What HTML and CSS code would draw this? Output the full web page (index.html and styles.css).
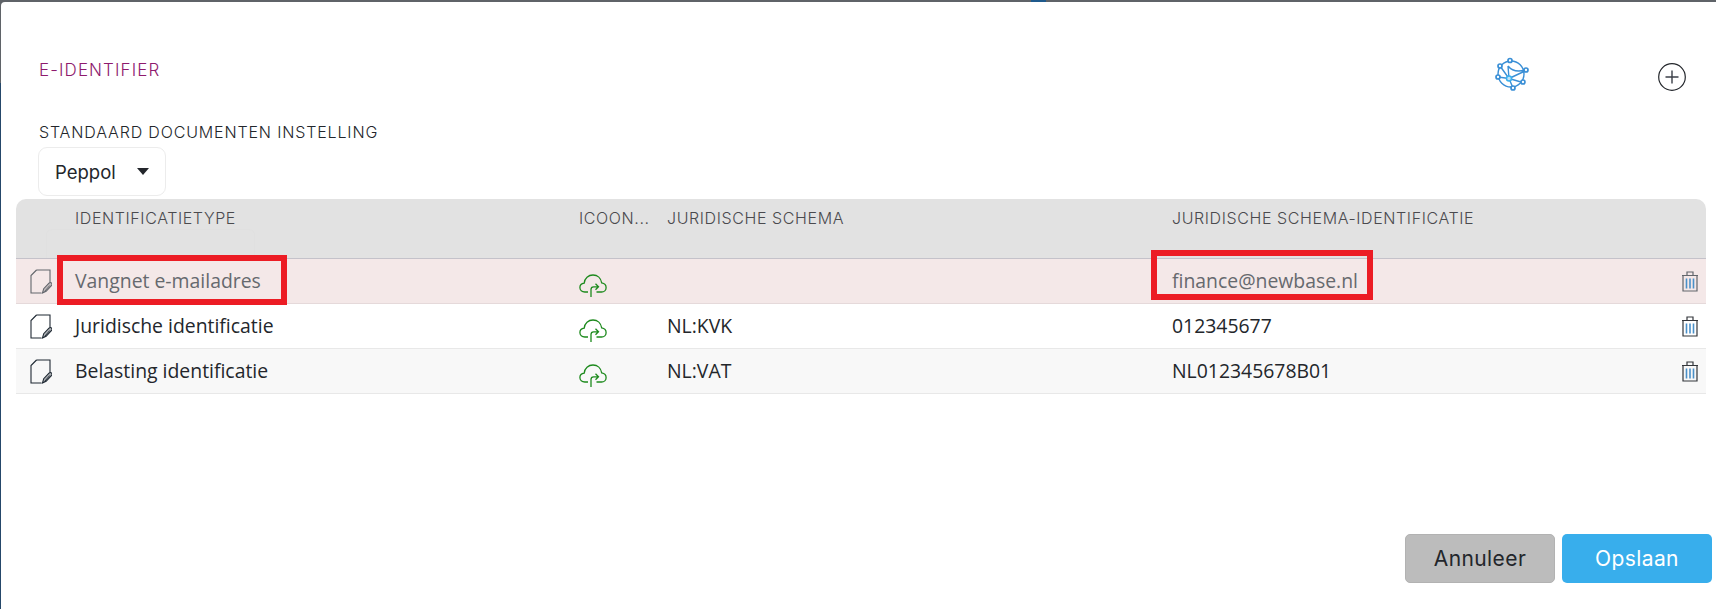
FILE: index.html
```html
<!DOCTYPE html>
<html lang="en">
  <head>
    <meta charset="UTF-8" />
    <title>E-Identifier</title>
    <link rel="stylesheet" href="styles.css">
  </head>
  <body>
    <svg class="icon-defs" width="0" height="0">
      <symbol id="doc" viewBox="0 0 22 25">
        <path d="M6.500 1H20V13.500M11.500 24H1V6.500L6.500 1" fill="none" stroke="currentColor" stroke-width="1.100"/>
        <path d="M12.500 24l1.200-4.300 5.300-5.500c.9-.9 2-.8 2.600-.1s.6 1.800-.2 2.600l-5.300 5.600z" fill="currentColor" fill-opacity="0.35" stroke="currentColor" stroke-width="1.100"/>
        <path d="M14.500 22.500l5.300-6" stroke="currentColor" stroke-width="1"/>
      </symbol>
      <symbol id="cloud" viewBox="0 0 28 23">
        <path d="M9 18H5.800C3 18 .9 16.100 .9 13.600c0-2.400 1.800-4.200 4.300-4.500C5.700 4.400 9.300 1 14 1c4.500 0 8 3.200 8.700 7.900 2.600.4 4.400 2.300 4.400 4.800 0 2.500-2 4.300-4.600 4.300H17.500" fill="none" stroke="#1d8a1d" stroke-width="1.300"/>
        <path d="M12 23V15.500c0-1.600 1-2.700 2.600-2.700H19M16.500 9.800l3 3-3 3" fill="none" stroke="#1d8a1d" stroke-width="1.300"/>
      </symbol>
      <symbol id="trash" viewBox="0 0 18 21">
        <path d="M1 4.500H17M2 4.500V20H16V4.500M6 4.500V1H12V4.500" fill="none" stroke="currentColor" stroke-width="1.200"/>
        <path d="M5.500 7.500V17.500M9 7.500V17.500M12.500 7.500V17.500" stroke="#4a90c8" stroke-width="1.600"/>
      </symbol>
    </svg>

    <div class="top-strip"><span class="top-mark"></span></div>
    <main class="modal">
      <div class="title-row">
        <h1 class="title">E-IDENTIFIER</h1>
        <svg class="network-icon" viewBox="0 0 34 34" width="34" height="34">
          <g fill="none" stroke="#3a8fd6" stroke-width="1.400">
            <circle cx="16" cy="17" r="13"/>
            <path d="M14 21.500L13 9M14 21.500L30 14M14 21.500L26 25M14 21.500L18 31M14 21.500L3 20M5 9L14 21.500M13 9C17 14 23 15 30 13"/>
          </g>
          <g fill="#fff" stroke="#3a8fd6" stroke-width="1.700">
            <circle cx="15" cy="3.500" r="2"/>
            <circle cx="31" cy="13" r="2"/>
            <circle cx="28" cy="25" r="2"/>
            <circle cx="18" cy="31" r="2"/>
            <circle cx="3" cy="20" r="2"/>
            <circle cx="5" cy="9" r="2"/>
          </g>
          <circle cx="14" cy="21.500" r="2.500" fill="#bfe3f8" stroke="#39b0ee" stroke-width="1.500"/>
        </svg>
        <svg class="add-icon" viewBox="0 0 28 28" width="28" height="28">
          <circle cx="14" cy="14" r="13.300" fill="none" stroke="#23262b" stroke-width="1.200"/>
          <path d="M7.500 14H20.500M14 7.500V20.500" stroke="#3b3f48" stroke-width="1.400"/>
        </svg>
      </div>

      <label class="field-label">STANDAARD DOCUMENTEN INSTELLING</label>
      <div class="select-box">
        <span>Peppol</span>
        <span class="caret"></span>
      </div>

      <div class="table-wrap">
        <table class="id-table">
          <colgroup>
            <col class="col-doc"><col class="col-type"><col class="col-icon"><col class="col-schema"><col class="col-id"><col class="col-del">
          </colgroup>
          <thead>
            <tr>
              <th></th>
              <th>IDENTIFICATIETYPE<div class="filter-box"></div></th>
              <th>ICOON...</th>
              <th>JURIDISCHE SCHEMA</th>
              <th>JURIDISCHE SCHEMA-IDENTIFICATIE</th>
              <th></th>
            </tr>
          </thead>
          <tbody>
            <tr class="row-flagged">
              <td><svg class="doc-icon"><use href="#doc"/></svg></td>
              <td>Vangnet e-mailadres</td>
              <td><svg class="cloud-icon"><use href="#cloud"/></svg></td>
              <td></td>
              <td>finance@newbase.nl</td>
              <td><svg class="trash-icon"><use href="#trash"/></svg></td>
            </tr>
            <tr>
              <td><svg class="doc-icon"><use href="#doc"/></svg></td>
              <td>Juridische identificatie</td>
              <td><svg class="cloud-icon"><use href="#cloud"/></svg></td>
              <td>NL:KVK</td>
              <td>012345677</td>
              <td><svg class="trash-icon"><use href="#trash"/></svg></td>
            </tr>
            <tr class="row-alt">
              <td><svg class="doc-icon"><use href="#doc"/></svg></td>
              <td>Belasting identificatie</td>
              <td><svg class="cloud-icon"><use href="#cloud"/></svg></td>
              <td>NL:VAT</td>
              <td>NL012345678B01</td>
              <td><svg class="trash-icon"><use href="#trash"/></svg></td>
            </tr>
          </tbody>
        </table>
        <div class="callout callout-type"></div>
        <div class="callout callout-id"></div>
      </div>

      <div class="actions">
        <button class="btn btn-cancel">Annuleer</button>
        <button class="btn btn-save">Opslaan</button>
      </div>
    </main>
  </body>
</html>
```

FILE: styles.css
```css
* {
  box-sizing: border-box;
}
html,
body {
  margin: 0;
  height: 609px;
  overflow: hidden;
}
body {
  background: linear-gradient(#5f6368 83px, #25486a 83px);
  font-family: "Open Sans", sans-serif;
  color: #23262b;
}
.icon-defs {
  display: block;
  height: 0;
}
.top-strip {
  height: 2px;
  background-color: #5f6368;
  position: relative;
}
.top-mark {
  position: absolute;
  left: 1031px;
  top: 0;
  width: 15px;
  height: 2px;
  background-color: #1f5a8c;
}
.modal {
  margin-left: 1px;
  height: 607px;
  background-color: #fff;
  border-top-left-radius: 4px;
  display: flex;
  flex-direction: column;
}
.title-row {
  display: flex;
  align-items: flex-start;
  padding: 55px 30px 0 38px;
  height: 119px;
}
.title {
  flex: 1;
  margin: 4px 0 0;
  font-family: Inter, sans-serif;
  font-size: 17px;
  font-weight: 300;
  line-height: 18px;
  letter-spacing: 1.1px;
  color: #8e1a6e;
}
.network-icon {
  margin-right: 129px;
}
.add-icon {
  margin-top: 6px;
}
.field-label {
  margin-left: 38px;
  padding-top: 1px;
  font-family: Inter, sans-serif;
  font-size: 16px;
  font-weight: 300;
  line-height: 20px;
  letter-spacing: 0.85px;
  color: #23262b;
  height: 26px;
}
.select-box {
  margin-left: 37px;
  width: 128px;
  height: 49px;
  padding: 0 16px 0 16px;
  border: 1px solid #ececec;
  border-radius: 9px;
  display: flex;
  align-items: center;
  justify-content: space-between;
  font-family: Inter, sans-serif;
  font-size: 18.500px;
}
.caret {
  border-left: 6.500px solid transparent;
  border-right: 6.500px solid transparent;
  border-top: 7px solid #23262b;
}
.table-wrap {
  position: relative;
  margin: 3px 10px 0 15px;
}
.id-table {
  width: 100%;
  table-layout: fixed;
  border-collapse: separate;
  border-spacing: 0;
}
.col-doc { width: 59px; }
.col-type { width: 504px; }
.col-icon { width: 88px; }
.col-schema { width: 505px; }
.col-id { width: 480px; }
.col-del { width: 54px; }
th {
  height: 60px;
  padding: 10px 0 0;
  vertical-align: top;
  text-align: left;
  font-family: Inter, sans-serif;
  font-size: 16px;
  font-weight: 300;
  line-height: 18px;
  letter-spacing: 0.6px;
  color: #4a4a4e;
  white-space: nowrap;
  background-color: #e2e2e2;
  border-bottom: 1px solid #c4c2ca;
}
th:first-child {
  border-top-left-radius: 10px;
}
th:last-child {
  border-top-right-radius: 10px;
}
.filter-box {
  width: 209px;
  height: 29px;
  margin: 2px 0 0 -29px;
  border: 1px solid #e0e0e0;
  border-bottom: 0;
  border-radius: 6px 6px 0 0;
}
td {
  height: 45px;
  padding: 0;
  font-size: 19.400px;
  line-height: 24px;
  white-space: nowrap;
  border-bottom: 1px solid #e8e8e8;
}
.row-flagged td {
  background-color: #f4e8e8;
  color: #66696e;
  border-bottom-color: #e5d9da;
}
.row-alt td {
  background-color: #f8f8f8;
}
.doc-icon {
  display: block;
  width: 22px;
  height: 25px;
  margin-left: 14px;
  color: #1f2933;
}
.row-flagged .doc-icon,
.row-flagged .trash-icon {
  color: #62666c;
}
.cloud-icon {
  display: block;
  width: 28px;
  height: 23px;
  margin-top: 8px;
}
.trash-icon {
  display: block;
  width: 18px;
  height: 21px;
  margin-left: 29px;
  color: #33363b;
}
.callout {
  position: absolute;
  border: 6px solid #ec1c24;
}
.callout-type {
  left: 41px;
  top: 56px;
  width: 230px;
  height: 50px;
}
.callout-id {
  left: 1135px;
  top: 51px;
  width: 222px;
  height: 50px;
}
.actions {
  margin-top: auto;
  padding: 0 4px 26px 0;
  display: flex;
  justify-content: flex-end;
  gap: 7px;
}
.btn {
  width: 150px;
  height: 49px;
  border: 1px solid transparent;
  border-radius: 5px;
  font-family: Inter, sans-serif;
  font-size: 21px;
  letter-spacing: 0.4px;
}
.btn-cancel {
  background-color: #bcbcbc;
  border-color: #b2b2b2;
  color: #23262b;
}
.btn-save {
  background-color: #38aeec;
  color: #fff;
}
```
